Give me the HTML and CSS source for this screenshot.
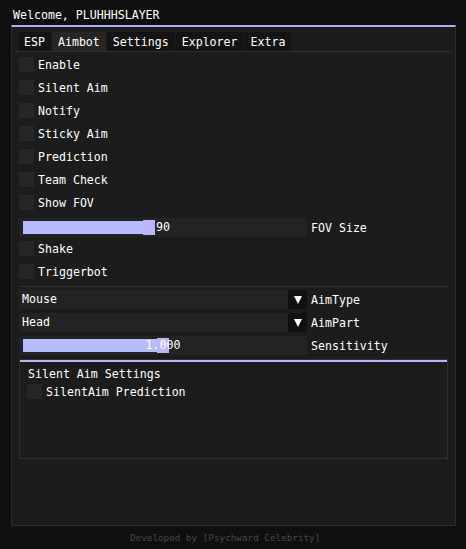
FILE: index.html
```html
<!DOCTYPE html>
<html>
<head>
<meta charset="utf-8">
<link rel="stylesheet" href="styles.css">
</head>
<body>
<div class="title">Welcome, PLUHHHSLAYER</div>
<div class="panel">
  <div class="tabs">
    <div class="tab">ESP</div>
    <div class="tab active">Aimbot</div>
    <div class="tab">Settings</div>
    <div class="tab">Explorer</div>
    <div class="tab">Extra</div>
  </div>
  <div class="content">
    <div class="row"><span class="box"></span><span>Enable</span></div>
    <div class="row"><span class="box"></span><span>Silent Aim</span></div>
    <div class="row"><span class="box"></span><span>Notify</span></div>
    <div class="row"><span class="box"></span><span>Sticky Aim</span></div>
    <div class="row"><span class="box"></span><span>Prediction</span></div>
    <div class="row"><span class="box"></span><span>Team Check</span></div>
    <div class="row"><span class="box"></span><span>Show FOV</span></div>
    <div class="row shifted">
      <div class="slider">
        <div class="fill" style="width:120px"></div><div class="grab"></div>
        <div class="value">90</div>
      </div>
      <span>FOV Size</span>
    </div>
    <div class="row"><span class="box"></span><span>Shake</span></div>
    <div class="row"><span class="box"></span><span>Triggerbot</span></div>
    <div class="sep"></div>
    <div class="row">
      <div class="combo"><div class="combo-text">Mouse</div><div class="arrow"><span class="tri"></span></div></div>
      <span>AimType</span>
    </div>
    <div class="row">
      <div class="combo"><div class="combo-text">Head</div><div class="arrow"><span class="tri"></span></div></div>
      <span>AimPart</span>
    </div>
    <div class="row">
      <div class="slider">
        <div class="fill" style="width:134px"></div><div class="grab"></div>
        <div class="value">1.000</div>
      </div>
      <span>Sensitivity</span>
    </div>
    <div class="child">
      <div class="child-bar"></div>
      <div class="child-body">
        <div class="child-title">Silent Aim Settings</div>
        <div class="row"><span class="box"></span><span>SilentAim Prediction</span></div>
      </div>
    </div>
  </div>
</div>
<div class="footer">Developed by [Psychward Celebrity]</div>
</body>
</html>
```
FILE: styles.css
```css
* { box-sizing: border-box; }
html, body {
  margin: 0;
  padding: 0;
  background: #0f0f0f;
  color: #ffffff;
  font-family: "DejaVu Sans Mono", "Liberation Mono", monospace;
  font-size: 11.6px;
  width: 466px;
  height: 549px;
  overflow: hidden;
}
.title {
  height: 25px;
  padding-top: 5px;
  padding-left: 13px;
  line-height: 20px;
  white-space: pre;
}
.panel {
  margin-left: 11px;
  width: 445px;
  height: 501px;
  background: #1c1c1c;
  border: 1px solid #2c2c2c;
  border-top: 2px solid #aeaef2;
  padding-top: 5px;
}
.tabs {
  display: flex;
  gap: 1px;
  margin: 0 3px;
  padding-left: 3px;
  border-bottom: 1px solid #2f2f2f;
}
.tab {
  height: 19px;
  line-height: 17px;
  padding: 2px 6px 0;
  background: #141414;
  white-space: pre;
}
.tab.active { background: #262626; }
.content {
  margin: 0 7px;
  padding-top: 3px;
  display: flex;
  flex-direction: column;
  gap: 4px;
}
.row {
  display: flex;
  align-items: center;
  height: 19px;
  gap: 4px;
  white-space: pre;
}
.row.shifted {
  margin-top: 2px;
  margin-bottom: -2px;
}
.box {
  width: 15px;
  height: 15px;
  background: #262626;
  flex: none;
}
.slider {
  position: relative;
  width: 288px;
  height: 19px;
  background: #232323;
  display: flex;
  align-items: center;
  padding-left: 4px;
  flex: none;
}
.fill {
  height: 13px;
  background: #b6bcff;
}
.grab {
  width: 12px;
  height: 15px;
  background: #bdb4ff;
}
.value {
  position: absolute;
  left: 0;
  top: 0;
  right: 0;
  bottom: 0;
  text-align: center;
  line-height: 19px;
}
.sep {
  height: 1px;
  background: #2f2f2f;
  margin-top: 1px;
  margin-bottom: -1px;
}
.combo {
  width: 288px;
  height: 19px;
  display: flex;
  flex: none;
}
.combo-text {
  flex: 1;
  background: #232323;
  padding-left: 3px;
  line-height: 19px;
}
.arrow {
  width: 19px;
  background: #111111;
  display: flex;
  align-items: center;
  justify-content: center;
}
.tri {
  width: 0;
  height: 0;
  border-left: 4.5px solid transparent;
  border-right: 4.5px solid transparent;
  border-top: 8px solid #ffffff;
}
.child {
  height: 100px;
  border: 1px solid #2f2f2f;
}
.child-bar {
  height: 2px;
  background: #b4b4ff;
}
.child-body {
  padding: 5px 7px 0;
  display: flex;
  flex-direction: column;
  gap: 1px;
}
.child-title {
  line-height: 14px;
  padding-left: 1px;
  white-space: pre;
}
.footer {
  margin-top: 5px;
  margin-left: 130px;
  line-height: 14px;
  font-size: 9.3px;
  color: #474747;
  white-space: pre;
}
```
